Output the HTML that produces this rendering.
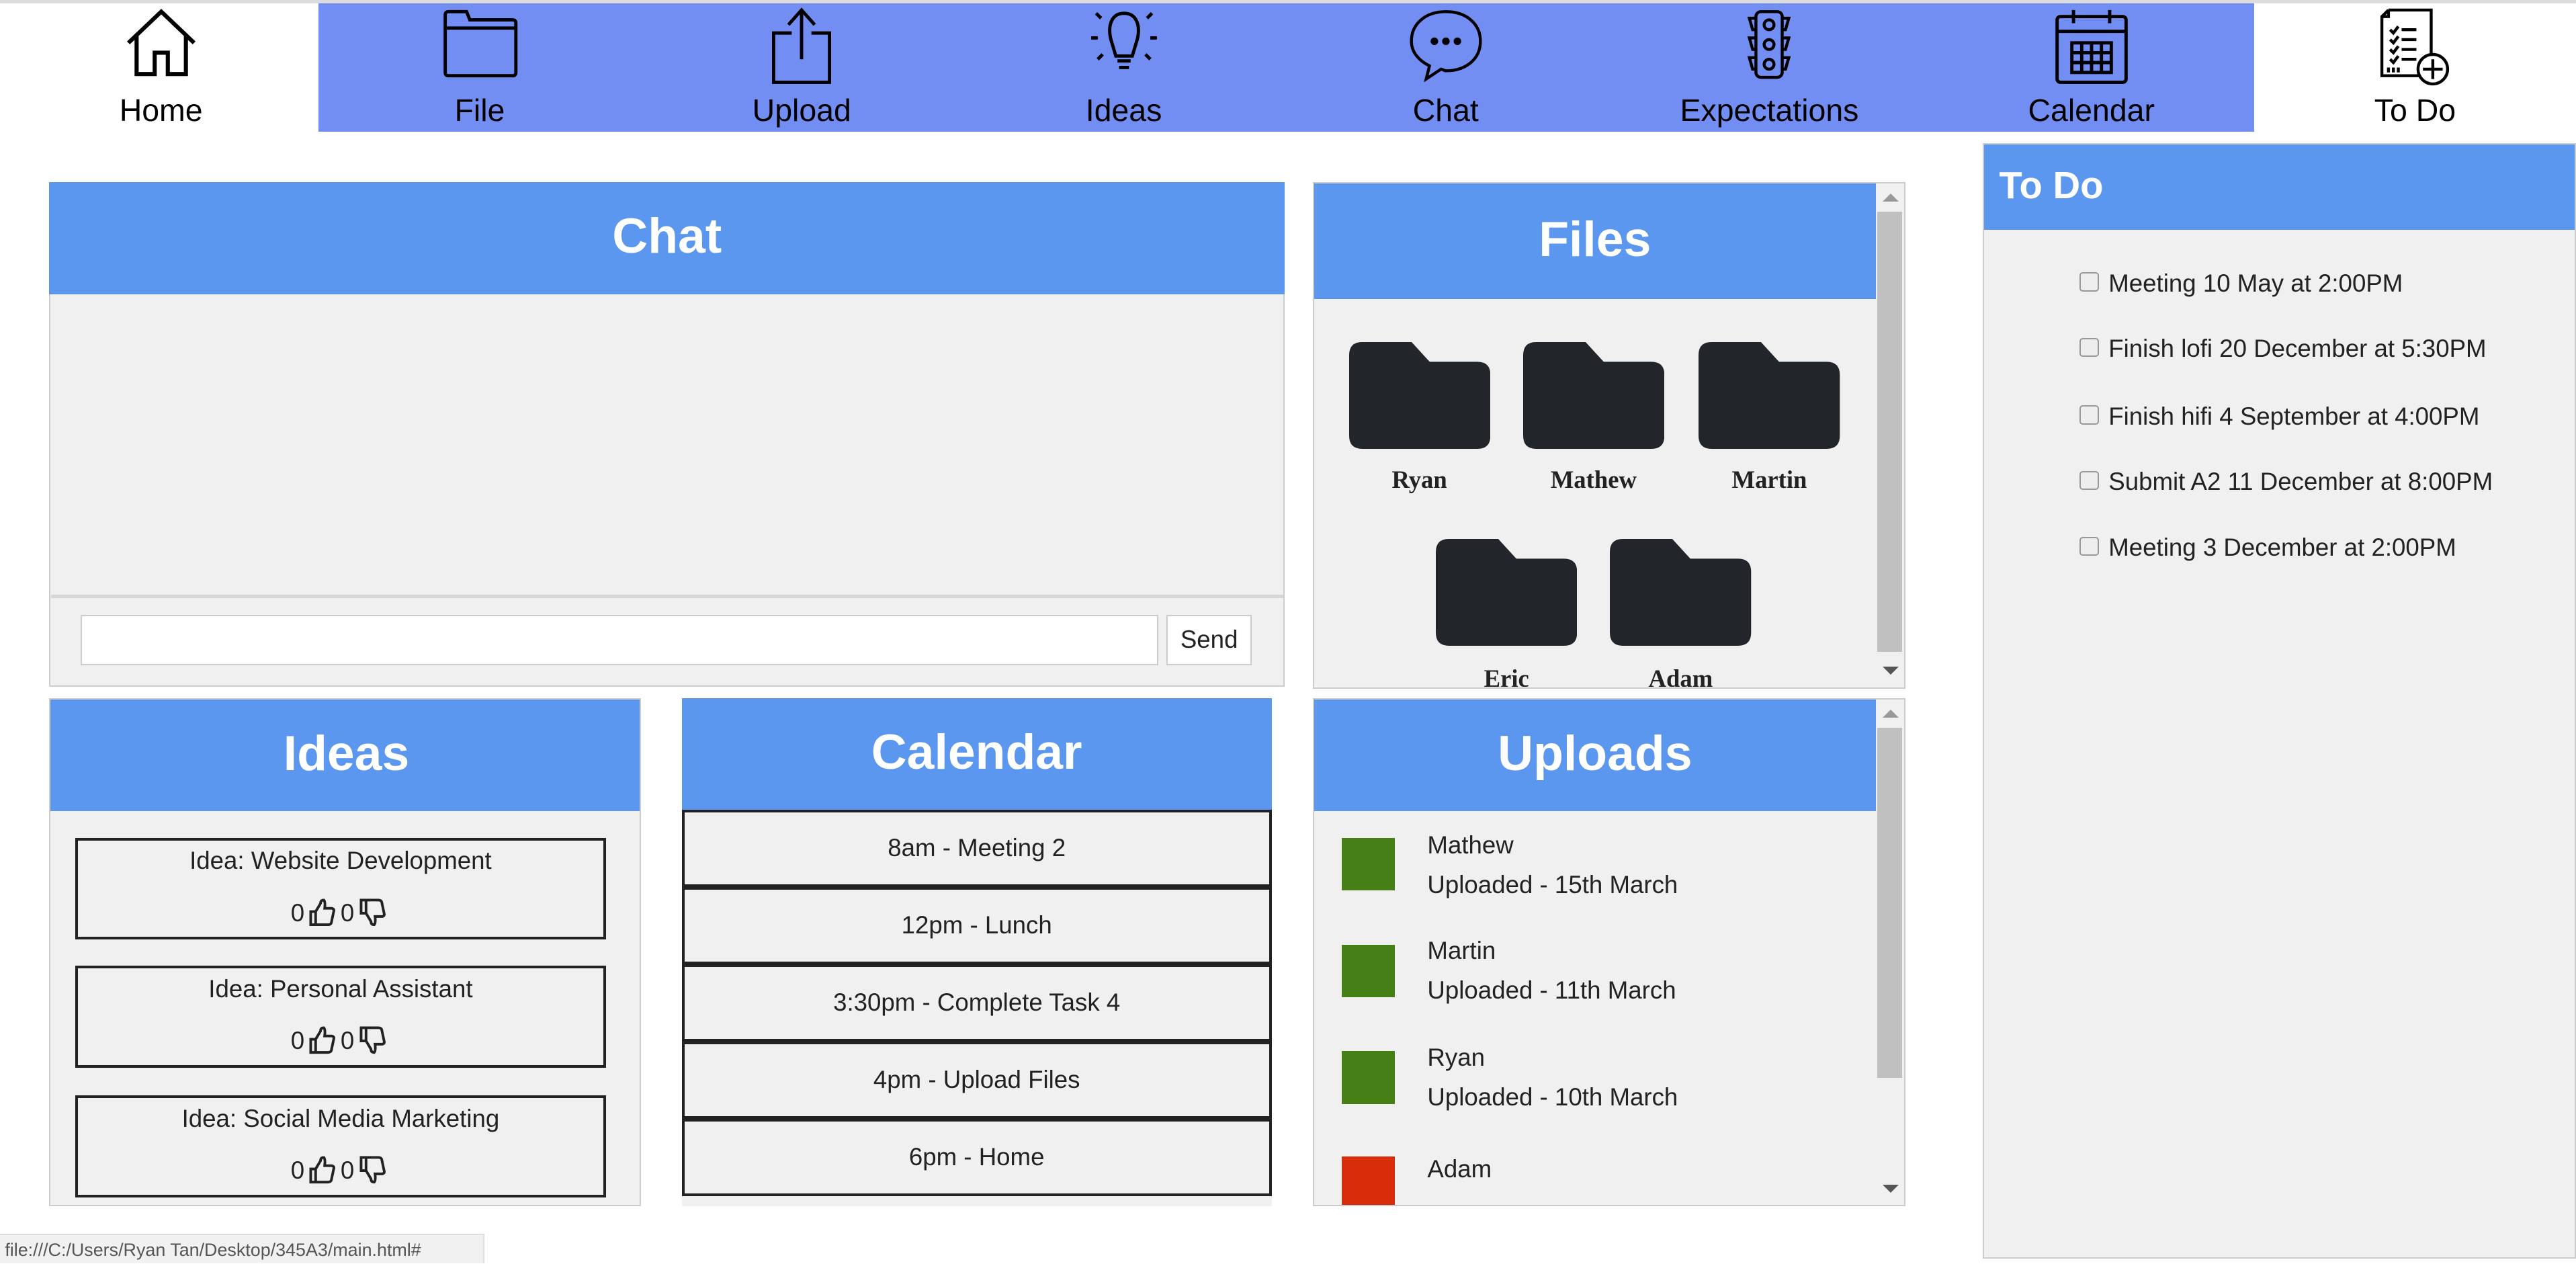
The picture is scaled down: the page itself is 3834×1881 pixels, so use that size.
<!DOCTYPE html>
<html><head><meta charset="utf-8"><style>
html,body{margin:0;padding:0;background:#fff;overflow:hidden}
body{width:3834px;height:1881px}
#r{zoom:2.4452;position:relative;width:1568px;height:769px;font-family:"Liberation Sans",sans-serif;color:#222}
.a{position:absolute}
.nav{top:2px;height:78px;width:196px;text-align:center}
.nav .l{position:absolute;top:54px;left:0;right:0;font-size:19px;color:#000}
.nav svg{position:absolute;left:50%;top:2px;transform:translateX(-50%)}
.hd{background:#5b96ef;color:#fff;font-weight:bold;text-align:center}
.pn{background:#f0f0f0;border:1px solid #ccc;box-sizing:border-box}
.fn{font-family:"Liberation Serif",serif;font-weight:bold;font-size:15px;width:86px;text-align:center;color:#222}
.idea{position:absolute;left:15px;width:323px;height:62px;border:2px solid #222;box-sizing:border-box;text-align:center;font-size:15px}
.idea .t{margin-top:4px}
.idea .v{margin-top:14px;font-size:15px;line-height:18px}
.idea .v svg{vertical-align:-3px;margin:0 3px}
.cal{position:absolute;left:0;width:359px;height:47px;border:2px solid #222;box-sizing:border-box;text-align:center;line-height:43px;font-size:15px}
.up .sq{position:absolute;left:17px;width:32px;height:32px}
.up .t{position:absolute;left:69px;font-size:15px;line-height:24px}
.td{position:absolute;left:58px;font-size:15px}
.td i{display:inline-block;width:10px;height:10px;border:1px solid #999;border-radius:2px;background:#eee;margin-right:6px;vertical-align:0}
</style></head><body><div id="r">
<div class="a" style="left:0;top:0;width:1568px;height:2px;background:#dcdcde"></div>
<div class="a" style="left:194px;top:2px;width:1178px;height:78px;background:#728ef2"></div>

<div class="a nav" style="left:0"><svg width="46" height="44" viewBox="0 0 46 44" fill="none" stroke="#000" stroke-width="2.5"><path d="M3 22 L23 3 L43 22 M8 18 V41 H19 V28 H27 V41 H38 V18"/></svg><div class="l">Home</div></div>
<div class="a nav" style="left:194px"><svg width="48" height="44" viewBox="0 0 48 44" fill="none" stroke="#000" stroke-width="2"><path d="M3 5 Q3 3 5 3 H16 L18 8 H44 Q46 8 46 10 V40 Q46 42 44 42 H5 Q3 42 3 40 Z M3 13 H46"/></svg><div class="l">File</div></div>
<div class="a nav" style="left:390px"><svg width="40" height="48" viewBox="0 0 40 48" fill="none" stroke="#000" stroke-width="2"><path d="M20 2 V32 M12 11 L20 2 L28 11 M14 16 H3 V46 H37 V16 H26"/></svg><div class="l">Upload</div></div>
<div class="a nav" style="left:586px"><svg width="44" height="46" viewBox="0 0 44 46" fill="none" stroke="#000" stroke-width="2"><path d="M22 4 C14 4 12 12 14 20 L17 30 H27 L30 20 C32 12 30 4 22 4 Z M18 33 H26 M19 37 H25"/><path d="M5 4 L8 7 M39 4 L36 7 M2 19 H6 M38 19 H42 M6 32 L9 29 M38 32 L35 29"/></svg><div class="l">Ideas</div></div>
<div class="a nav" style="left:782px"><svg width="48" height="46" viewBox="0 0 48 46" fill="none" stroke="#000" stroke-width="1.8"><path d="M24 3 C12 3 3 10 3 21 C3 28 8 33 14 36 L12 44 L21 38 C22 38 23 39 24 39 C36 39 45 32 45 21 C45 10 36 3 24 3 Z"/><circle cx="17" cy="21" r="1.4" fill="#000"/><circle cx="24" cy="21" r="1.4" fill="#000"/><circle cx="31" cy="21" r="1.4" fill="#000"/></svg><div class="l">Chat</div></div>
<div class="a nav" style="left:979px"><svg width="40" height="46" viewBox="0 0 40 46" fill="none" stroke="#000" stroke-width="1.8"><rect x="12" y="3" width="16" height="40" rx="3"/><circle cx="20" cy="11" r="3"/><circle cx="20" cy="23" r="3"/><circle cx="20" cy="35" r="3"/><path d="M12 7 H8 L10 14 H12 M28 7 H32 L30 14 H28 M12 19 H8 L10 26 H12 M28 19 H32 L30 26 H28 M12 31 H8 L10 38 H12 M28 31 H32 L30 38 H28"/></svg><div class="l">Expectations</div></div>
<div class="a nav" style="left:1175px"><svg width="48" height="48" viewBox="0 0 48 48" fill="none" stroke="#000" stroke-width="2"><rect x="3" y="6" width="42" height="40" rx="2"/><path d="M3 15 H45 M13 2 V10 M35 2 V10"/><rect x="12" y="22" width="24" height="18"/><path d="M18 22 V40 M24 22 V40 M30 22 V40 M12 28 H36 M12 34 H36"/></svg><div class="l">Calendar</div></div>
<div class="a nav" style="left:1372px"><svg width="46" height="50" viewBox="0 0 46 50" fill="none" stroke="#000" stroke-width="1.8"><path d="M7 2 H33 V30 M7 2 L3 6 V42 H26 M3 6 H7 V2"/><path d="M8 14 L10 16 L13 12 M15 14 H24 M8 20 L10 22 L13 18 M15 20 H24 M8 26 L10 28 L13 24 M15 26 H24 M8 32 L10 34 L13 30 M15 32 H24 M7 37 V40 M10 37 V40 M13 37 V40"/><circle cx="34" cy="38" r="9"/><path d="M34 32 V44 M28 38 H40"/></svg><div class="l">To Do</div></div>

<!-- Chat -->
<div class="a pn" style="left:30px;top:111px;width:752px;height:307px"></div>
<div class="a hd" style="left:30px;top:111px;width:752px;height:68px;line-height:66px;font-size:30px">Chat</div>
<div class="a" style="left:31px;top:362px;width:750px;height:2px;background:#d6d6d6"></div>
<div class="a" style="left:49px;top:374px;width:656px;height:31px;background:#fff;border:1px solid #ccc;box-sizing:border-box"></div>
<div class="a" style="left:710px;top:374px;width:52px;height:31px;background:#fff;border:1px solid #ccc;box-sizing:border-box;text-align:center;line-height:29px;font-size:15px">Send</div>

<!-- Files -->
<div class="a pn" style="left:799px;top:111px;width:361px;height:308px;overflow:hidden">
 <div class="a hd" style="left:0;top:0;width:342px;height:70px;line-height:68px;font-size:30px">Files</div>
 <div class="a" style="left:342px;top:0;width:17px;height:306px;background:#f0f0f0"></div>
 <div class="a" style="left:343px;top:17px;width:15px;height:268px;background:#c0c0c0"></div>
 <div class="a" style="left:346px;top:6px;width:0;height:0;border:5px solid transparent;border-bottom:5px solid #999;border-top:0"></div>
 <div class="a" style="left:346px;top:294px;width:0;height:0;border:5px solid transparent;border-top:5px solid #555;border-bottom:0"></div>
</div>
<svg class="a" style="left:821px;top:208px" width="86" height="65"><path d="M8 0 H38 L49 12 H78 Q86 12 86 20 V57 Q86 65 78 65 H8 Q0 65 0 57 V8 Q0 0 8 0Z" fill="#22252a"/></svg>
<svg class="a" style="left:927px;top:208px" width="86" height="65"><path d="M8 0 H38 L49 12 H78 Q86 12 86 20 V57 Q86 65 78 65 H8 Q0 65 0 57 V8 Q0 0 8 0Z" fill="#22252a"/></svg>
<svg class="a" style="left:1034px;top:208px" width="86" height="65"><path d="M8 0 H38 L49 12 H78 Q86 12 86 20 V57 Q86 65 78 65 H8 Q0 65 0 57 V8 Q0 0 8 0Z" fill="#22252a"/></svg>
<svg class="a" style="left:874px;top:328px" width="86" height="65"><path d="M8 0 H38 L49 12 H78 Q86 12 86 20 V57 Q86 65 78 65 H8 Q0 65 0 57 V8 Q0 0 8 0Z" fill="#22252a"/></svg>
<svg class="a" style="left:980px;top:328px" width="86" height="65"><path d="M8 0 H38 L49 12 H78 Q86 12 86 20 V57 Q86 65 78 65 H8 Q0 65 0 57 V8 Q0 0 8 0Z" fill="#22252a"/></svg>
<div class="a fn" style="left:821px;top:283px">Ryan</div>
<div class="a fn" style="left:927px;top:283px">Mathew</div>
<div class="a fn" style="left:1034px;top:283px">Martin</div>
<div class="a" style="left:800px;top:400px;width:342px;height:18px;overflow:hidden"><div class="a fn" style="left:74px;top:4px">Eric</div><div class="a fn" style="left:180px;top:4px">Adam</div></div>

<!-- Ideas -->
<div class="a pn" style="left:30px;top:425px;width:360px;height:309px;overflow:hidden">
 <div class="a hd" style="left:0;top:0;width:360px;height:68px;line-height:66px;font-size:30px">Ideas</div>
 <div class="idea" style="top:84px"><div class="t">Idea: Website Development</div><div class="v">0<svg width="16" height="17" viewBox="0 0 16 17" fill="none" stroke="#222" stroke-width="1.6"><path d="M1 8 H4 V16 H1 Z M4 8 L7 3 Q7 1 9 1 Q10 2 9.5 6 H14 Q15.5 6.5 15 8 L13.5 15 Q13 16 11.5 16 H4"/></svg>0<svg width="16" height="17" viewBox="0 0 16 17" fill="none" stroke="#222" stroke-width="1.6"><path d="M1 1 H4 V9 H1 Z M4 9 L7 14 Q7 16 9 16 Q10 15 9.5 11 H14 Q15.5 10.5 15 9 L13.5 2 Q13 1 11.5 1 H4"/></svg></div></div>
 <div class="idea" style="top:162px"><div class="t">Idea: Personal Assistant</div><div class="v">0<svg width="16" height="17" viewBox="0 0 16 17" fill="none" stroke="#222" stroke-width="1.6"><path d="M1 8 H4 V16 H1 Z M4 8 L7 3 Q7 1 9 1 Q10 2 9.5 6 H14 Q15.5 6.5 15 8 L13.5 15 Q13 16 11.5 16 H4"/></svg>0<svg width="16" height="17" viewBox="0 0 16 17" fill="none" stroke="#222" stroke-width="1.6"><path d="M1 1 H4 V9 H1 Z M4 9 L7 14 Q7 16 9 16 Q10 15 9.5 11 H14 Q15.5 10.5 15 9 L13.5 2 Q13 1 11.5 1 H4"/></svg></div></div>
 <div class="idea" style="top:241px"><div class="t">Idea: Social Media Marketing</div><div class="v">0<svg width="16" height="17" viewBox="0 0 16 17" fill="none" stroke="#222" stroke-width="1.6"><path d="M1 8 H4 V16 H1 Z M4 8 L7 3 Q7 1 9 1 Q10 2 9.5 6 H14 Q15.5 6.5 15 8 L13.5 15 Q13 16 11.5 16 H4"/></svg>0<svg width="16" height="17" viewBox="0 0 16 17" fill="none" stroke="#222" stroke-width="1.6"><path d="M1 1 H4 V9 H1 Z M4 9 L7 14 Q7 16 9 16 Q10 15 9.5 11 H14 Q15.5 10.5 15 9 L13.5 2 Q13 1 11.5 1 H4"/></svg></div></div>
</div>

<!-- Calendar -->
<div class="a pn" style="left:415px;top:425px;width:359px;height:309px;overflow:hidden;border:none">
 <div class="a hd" style="left:0;top:0;width:359px;height:68px;line-height:66px;font-size:30px">Calendar</div>
 <div class="cal" style="top:68px">8am - Meeting 2</div>
 <div class="cal" style="top:115px">12pm - Lunch</div>
 <div class="cal" style="top:162px">3:30pm - Complete Task 4</div>
 <div class="cal" style="top:209px">4pm - Upload Files</div>
 <div class="cal" style="top:256px">6pm - Home</div>
</div>

<!-- Uploads -->
<div class="a pn up" style="left:799px;top:425px;width:361px;height:309px;overflow:hidden">
 <div class="a hd" style="left:0;top:0;width:342px;height:68px;line-height:66px;font-size:30px">Uploads</div>
 <div class="a" style="left:343px;top:17px;width:15px;height:213px;background:#c0c0c0"></div>
 <div class="a" style="left:346px;top:6px;width:0;height:0;border:5px solid transparent;border-bottom:5px solid #999;border-top:0"></div>
 <div class="a" style="left:346px;top:295px;width:0;height:0;border:5px solid transparent;border-top:5px solid #555;border-bottom:0"></div>
 <div class="sq" style="top:84px;background:#467f16"></div><div class="t" style="top:77px">Mathew<br>Uploaded - 15th March</div>
 <div class="sq" style="top:149px;background:#467f16"></div><div class="t" style="top:141px">Martin<br>Uploaded - 11th March</div>
 <div class="sq" style="top:214px;background:#467f16"></div><div class="t" style="top:206px">Ryan<br>Uploaded - 10th March</div>
 <div class="sq" style="top:278px;background:#d92c0a"></div><div class="t" style="top:274px">Adam</div>
</div>

<!-- To Do -->
<div class="a pn" style="left:1207px;top:87px;width:361px;height:679px;overflow:hidden">
 <div class="a hd" style="left:0;top:0;width:361px;height:52px;line-height:50px;font-size:23px;text-align:left;padding-left:9px;box-sizing:border-box">To Do</div>
 <div class="td" style="top:76px"><i></i>Meeting 10 May at 2:00PM</div>
 <div class="td" style="top:116px"><i></i>Finish lofi 20 December at 5:30PM</div>
 <div class="td" style="top:157px"><i></i>Finish hifi 4 September at 4:00PM</div>
 <div class="td" style="top:197px"><i></i>Submit A2 11 December at 8:00PM</div>
 <div class="td" style="top:237px"><i></i>Meeting 3 December at 2:00PM</div>
</div>

<div class="a" style="left:0;top:751px;width:295px;height:18px;background:#f1f1f1;border-top:1px solid #ddd;border-right:1px solid #ddd;font-size:11px;color:#555;line-height:18px;padding-left:3px;box-sizing:border-box">file:///C:/Users/Ryan Tan/Desktop/345A3/main.html#</div>
</div></body></html>
